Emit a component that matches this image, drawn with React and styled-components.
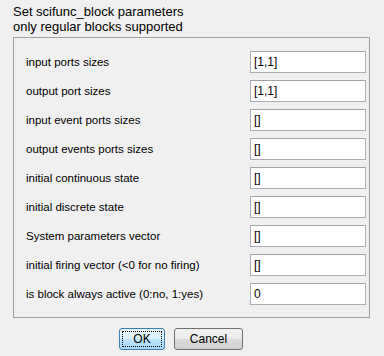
import React from 'react';
import styled, { createGlobalStyle } from 'styled-components';

const GlobalStyle = createGlobalStyle`
  html, body {
    margin: 0;
    padding: 0;
    background: #f0f0f0;
  }
  body {
    font-family: "Liberation Sans", Arial, sans-serif;
    font-size: 12px;
    color: #000;
  }
`;

const fields = [
  { label: 'input ports sizes', value: '[1,1]' },
  { label: 'output port sizes', value: '[1,1]' },
  { label: 'input event ports sizes', value: '[]' },
  { label: 'output events ports sizes', value: '[]' },
  { label: 'initial continuous state', value: '[]' },
  { label: 'initial discrete state', value: '[]' },
  { label: 'System parameters vector', value: '[]' },
  { label: 'initial firing vector (<0 for no firing)', value: '[]' },
  { label: 'is block always active (0:no, 1:yes)', value: '0' },
];

function App() {
  return (
    <>
      <GlobalStyle />
      <Dialog>
        <Header>
          <div>Set scifunc_block parameters</div>
          <div>only regular blocks supported</div>
        </Header>
        <Panel>
          {fields.map((f) => (
            <Row key={f.label}>
              <Label>{f.label}</Label>
              <Field>{f.value}</Field>
            </Row>
          ))}
        </Panel>
        <Buttons>
          <Button primary>OK</Button>
          <Button>Cancel</Button>
        </Buttons>
      </Dialog>
    </>
  );
}

const Dialog = styled.div`
  width: 384px;
  height: 356px;
  box-sizing: border-box;
  padding: 4px 14px 0 13px;
  display: flex;
  flex-direction: column;
`;

const Header = styled.div`
  font-size: 13px;
  line-height: 15px;
  height: 33px;
`;

const Panel = styled.div`
  border: 1px solid #a0a0a0;
  padding: 13px 3px 12px 12px;
  display: flex;
  flex-direction: column;
  gap: 7px;
`;

const Row = styled.div`
  display: flex;
  align-items: center;
  justify-content: space-between;
  height: 22px;
`;

const Label = styled.span`
  white-space: nowrap;
  font-size: 11.5px;
`;

const Field = styled.div`
  width: 116px;
  height: 22px;
  box-sizing: border-box;
  border: 1px solid #abadb3;
  border-top-color: #a3a3a3;
  background: #fff;
  padding: 0 3px;
  line-height: 20px;
`;

const Buttons = styled.div`
  display: flex;
  gap: 9px;
  padding: 10px 0 0 106px;
`;

const Button = styled.div`
  position: relative;
  height: 22px;
  box-sizing: border-box;
  width: ${(p) => (p.primary ? '46px' : '69px')};
  border: 1px solid ${(p) => (p.primary ? '#3c7fb1' : '#707070')};
  border-radius: 3px;
  background: ${(p) =>
    p.primary
      ? 'linear-gradient(#eaf6fd 0%, #d9f0fc 50%, #bee6fd 51%, #a7d9f5 100%)'
      : 'linear-gradient(#f2f2f2 0%, #ebebeb 50%, #dddddd 51%, #cfcfcf 100%)'};
  display: flex;
  align-items: center;
  justify-content: center;
  font-size: 12px;
  &::after {
    content: '';
    display: ${(p) => (p.primary ? 'block' : 'none')};
    position: absolute;
    inset: 2px;
    border: 1px dotted #000;
  }
`;

export default App;
